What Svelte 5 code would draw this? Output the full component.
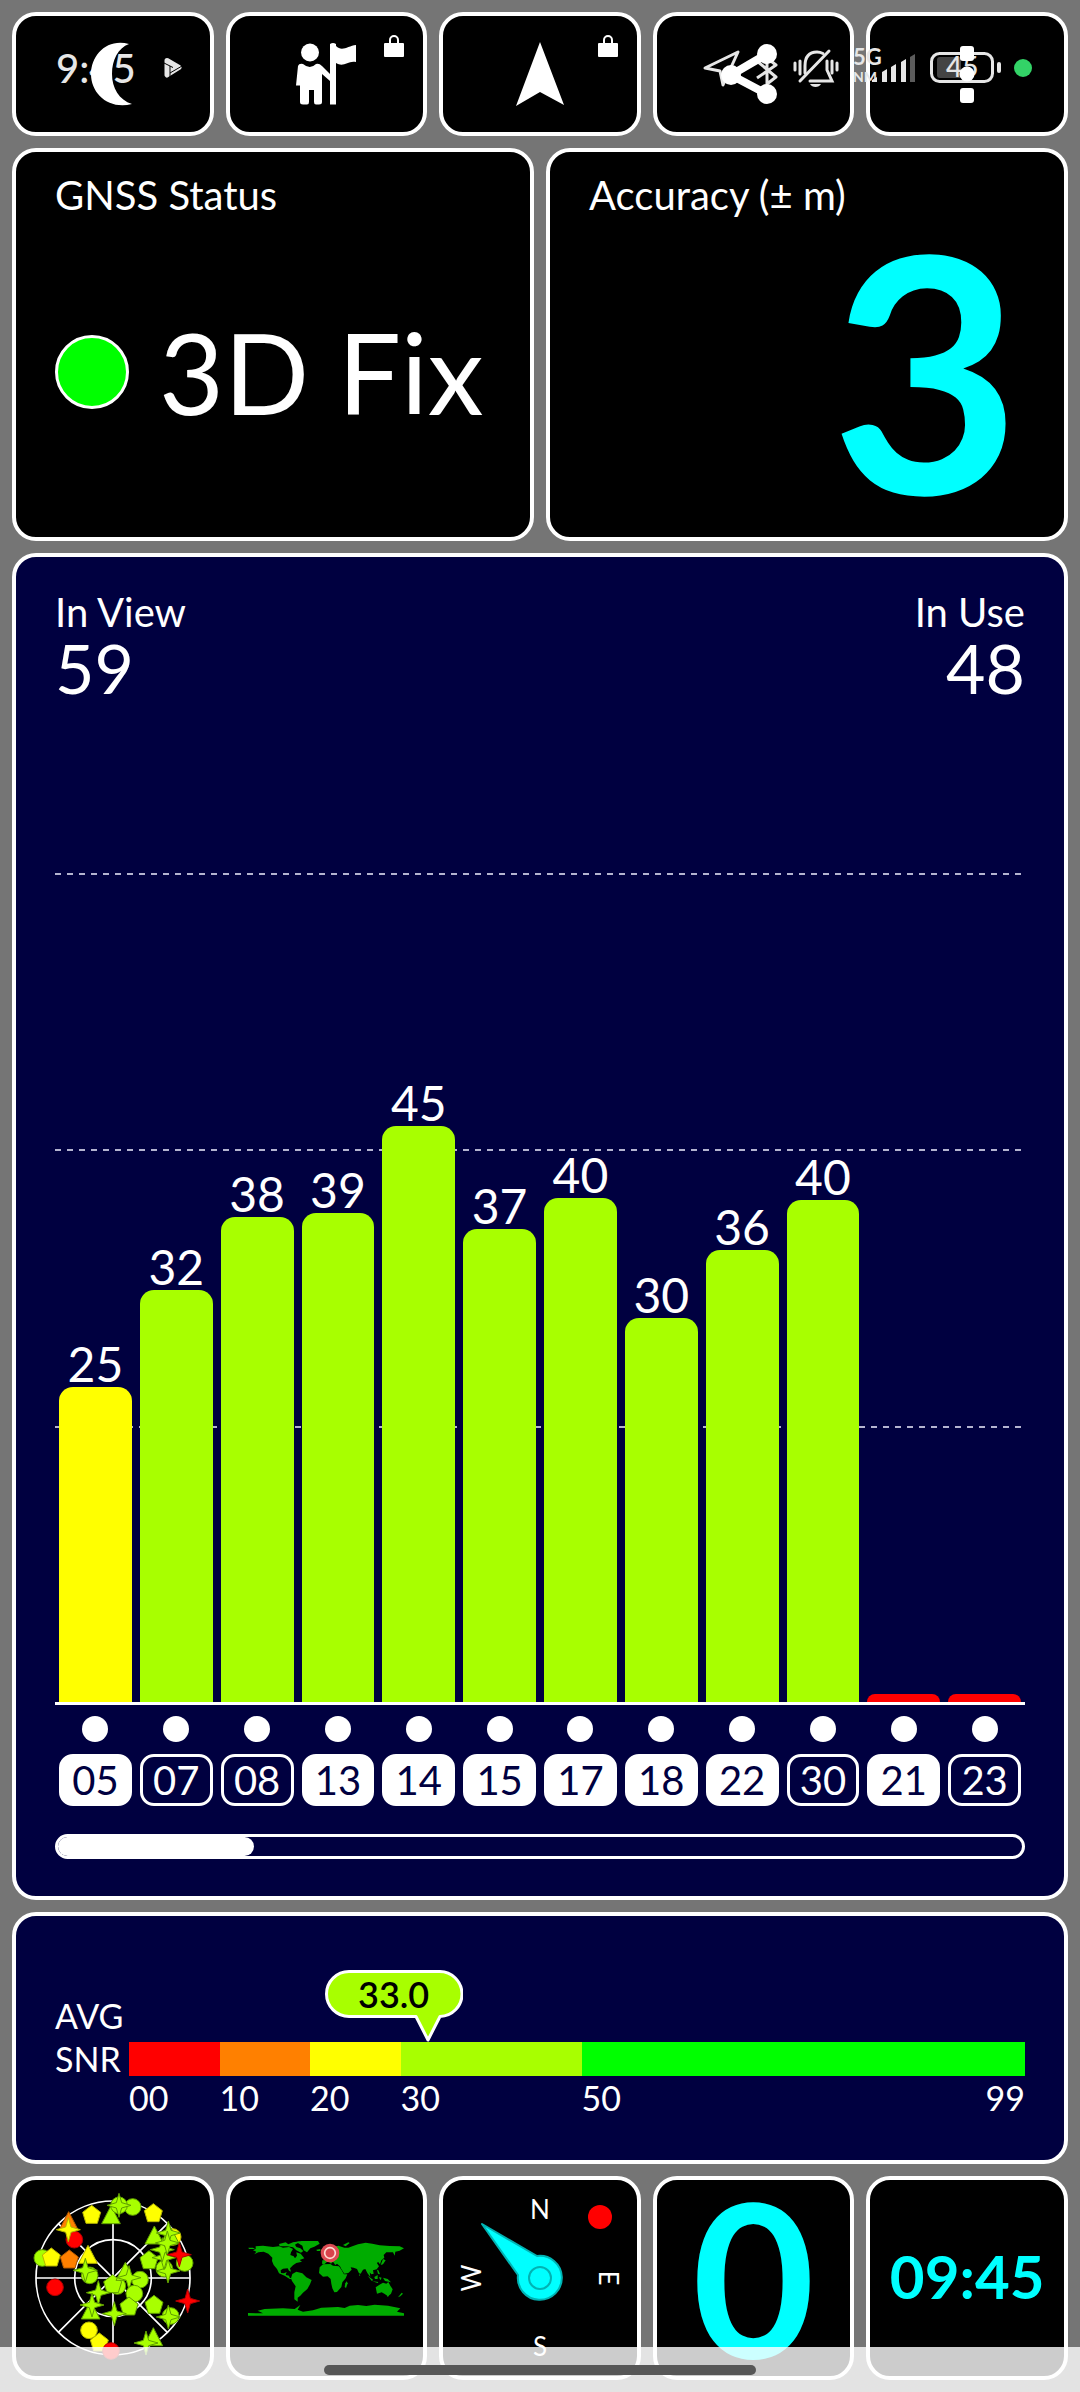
<script lang="ts">
  type Fill = 'green' | 'lime' | 'yellow' | 'orange' | 'red';

  interface Satellite {
    id: string;
    snr: number;
    level: number;
    color: Fill;
    used: boolean;
  }

  interface Marker {
    shape: 'circle' | 'penta' | 'tri' | 'star';
    color: Fill;
    x: number;
    y: number;
  }

  const maxLevel = 86.6;

  const satellites: Satellite[] = [
    { id: '05', snr: 25, level: 24.7, color: 'yellow', used: true },
    { id: '07', snr: 32, level: 32.3, color: 'lime', used: false },
    { id: '08', snr: 38, level: 38, color: 'lime', used: false },
    { id: '13', snr: 39, level: 38.3, color: 'lime', used: true },
    { id: '14', snr: 45, level: 45.1, color: 'lime', used: true },
    { id: '15', snr: 37, level: 37, color: 'lime', used: true },
    { id: '17', snr: 40, level: 39.5, color: 'lime', used: true },
    { id: '18', snr: 30, level: 30.1, color: 'lime', used: true },
    { id: '22', snr: 36, level: 35.4, color: 'lime', used: true },
    { id: '30', snr: 40, level: 39.3, color: 'lime', used: false },
    { id: '21', snr: 0, level: 0.6, color: 'red', used: true },
    { id: '23', snr: 0, level: 0.6, color: 'red', used: false },
  ];

  const bands: { from: string; to?: string; color: Fill }[] = [
    { from: '00', color: 'red' },
    { from: '10', color: 'orange' },
    { from: '20', color: 'yellow' },
    { from: '30', color: 'lime' },
    { from: '50', to: '99', color: 'green' },
  ];

  const inView = 59;
  const inUse = 48;
  const average = 33;

  let shownShare = $derived((satellites.length / inView) * 100);
  let averageLeft = $derived((average / 99) * 100);

  const shapes = {
    penta: 'M0-28L27-7L17 26H-17L-27-7Z',
    tri: 'M0-32L28 22H-28Z',
    star: 'M0-36L8-8L36 0L8 8L0 36L-8 8L-36 0L-8-8Z',
  };

  const sky: Marker[] = [
    { shape: 'penta', color: 'yellow', x: 275, y: 163 },
    { shape: 'tri', color: 'lime', x: 333, y: 168 },
    { shape: 'circle', color: 'lime', x: 398, y: 140 },
    { shape: 'circle', color: 'lime', x: 357, y: 135 },
    { shape: 'star', color: 'lime', x: 357, y: 135 },
    { shape: 'penta', color: 'yellow', x: 460, y: 158 },
    { shape: 'circle', color: 'red', x: 223, y: 238 },
    { shape: 'tri', color: 'orange', x: 206, y: 186 },
    { shape: 'star', color: 'yellow', x: 205, y: 208 },
    { shape: 'circle', color: 'lime', x: 127, y: 293 },
    { shape: 'penta', color: 'yellow', x: 154, y: 291 },
    { shape: 'penta', color: 'orange', x: 208, y: 297 },
    { shape: 'tri', color: 'yellow', x: 264, y: 287 },
    { shape: 'circle', color: 'red', x: 165, y: 381 },
    { shape: 'circle', color: 'lime', x: 269, y: 345 },
    { shape: 'star', color: 'lime', x: 256, y: 330 },
    { shape: 'circle', color: 'lime', x: 352, y: 377 },
    { shape: 'penta', color: 'lime', x: 338, y: 371 },
    { shape: 'tri', color: 'lime', x: 376, y: 338 },
    { shape: 'circle', color: 'lime', x: 420, y: 358 },
    { shape: 'star', color: 'lime', x: 387, y: 352 },
    { shape: 'circle', color: 'lime', x: 403, y: 400 },
    { shape: 'penta', color: 'lime', x: 387, y: 438 },
    { shape: 'star', color: 'lime', x: 295, y: 397 },
    { shape: 'tri', color: 'lime', x: 272, y: 454 },
    { shape: 'star', color: 'lime', x: 276, y: 434 },
    { shape: 'star', color: 'lime', x: 343, y: 460 },
    { shape: 'penta', color: 'lime', x: 462, y: 433 },
    { shape: 'circle', color: 'lime', x: 512, y: 467 },
    { shape: 'star', color: 'lime', x: 505, y: 470 },
    { shape: 'circle', color: 'yellow', x: 267, y: 510 },
    { shape: 'penta', color: 'yellow', x: 298, y: 546 },
    { shape: 'circle', color: 'red', x: 333, y: 572 },
    { shape: 'tri', color: 'lime', x: 460, y: 534 },
    { shape: 'star', color: 'lime', x: 438, y: 548 },
    { shape: 'star', color: 'red', x: 563, y: 422 },
    { shape: 'penta', color: 'lime', x: 447, y: 299 },
    { shape: 'tri', color: 'lime', x: 463, y: 229 },
    { shape: 'circle', color: 'yellow', x: 518, y: 230 },
    { shape: 'tri', color: 'lime', x: 510, y: 229 },
    { shape: 'star', color: 'lime', x: 505, y: 218 },
    { shape: 'circle', color: 'lime', x: 493, y: 325 },
    { shape: 'star', color: 'lime', x: 504, y: 332 },
    { shape: 'star', color: 'lime', x: 492, y: 292 },
    { shape: 'star', color: 'lime', x: 487, y: 268 },
    { shape: 'star', color: 'lime', x: 502, y: 248 },
    { shape: 'circle', color: 'lime', x: 554, y: 308 },
    { shape: 'star', color: 'red', x: 538, y: 283 },
  ];
</script>

{#snippet lock()}
  <svg class="lock" viewBox="0 0 20 23" aria-hidden="true">
    <path d="M6 10V6a4 4 0 0 1 8 0v4" fill="none" stroke="#fff" stroke-width="2" />
    <rect y="9" width="20" height="14" rx="1" fill="#fff" />
  </svg>
{/snippet}

<main class="page">
  <div class="status-bar">
    <span class="clock">9:45</span>
    <svg class="play" viewBox="0 0 18 20" aria-hidden="true">
      <path d="M3 2.500L15 9.500L3 17Z" fill="#e6e6e6" stroke="#e6e6e6" stroke-width="5" stroke-linejoin="round" />
      <path d="M0 5L9 9.500M6 8V19M6 15L18 8" stroke="#000" stroke-width="1" />
    </svg>
    <div class="status-icons">
      <svg width="38" height="40" viewBox="0 0 38 40" aria-hidden="true">
        <path d="M2 20L35 4L20 37L17 23Z" fill="none" stroke="#e6e6e6" stroke-width="3" stroke-linejoin="round" />
      </svg>
      <svg width="24" height="40" viewBox="0 0 24 40" aria-hidden="true">
        <path d="M2 13L21 29L12 36V10L21 17L2 30" fill="none" stroke="#e6e6e6" stroke-width="3" stroke-linejoin="round" />
      </svg>
      <svg width="46" height="40" viewBox="0 0 46 40" aria-hidden="true">
        <g fill="none" stroke="#e6e6e6" stroke-width="3" stroke-linecap="round">
          <path d="M7 33L36 3" />
          <path d="M12 25V18C12 8 17 4 24 4C26 4 28 4.500 30 5.500" />
          <path d="M34 13V22L39 33H17" />
          <path d="M2 15V22M7 13V26M39 13V25M44 15V22" />
        </g>
        <path d="M17 36H28C26 40 19 40 17 36Z" fill="#e6e6e6" />
      </svg>
      <svg width="63" height="40" viewBox="0 0 63 40" aria-hidden="true">
        <text class="network" x="0" y="17">5G</text>
        <text class="carrier" x="0" y="34">NM</text>
        <path d="M19 34V32L24 29V34ZM29 34V24L34 21V34ZM38 34V19L43 16V34ZM48 34V14L53 11V34Z" fill="#e6e6e6" />
        <path d="M57 34V9L62 6V34Z" fill="#5c5c5c" />
      </svg>
      <svg width="72" height="40" viewBox="0 0 72 40" aria-hidden="true">
        <rect x="1.500" y="5.500" width="61" height="28" rx="8" fill="none" stroke="#e6e6e6" stroke-width="3" />
        <path d="M10 9H31V30H10Q7 30 7 27V12Q7 9 10 9Z" fill="#444" />
        <rect x="67" y="14" width="4" height="11" rx="2" fill="#e6e6e6" />
        <text class="charge" x="16" y="29">45</text>
      </svg>
      <span class="privacy-dot"></span>
    </div>
  </div>

  <nav class="tiles">
    <button class="card tile" aria-label="Night mode">
      <svg class="icon" viewBox="0 0 64 64" aria-hidden="true">
        <path d="M48 2C26-4 10 13 10 32C10 52 28 68 51 62C38 58 31 46 31 32C31 18 37 6 48 2Z" fill="#fff" />
      </svg>
    </button>
    <button class="card tile" aria-label="Waypoint guide">
      <svg class="icon" viewBox="0 0 64 64" aria-hidden="true">
        <circle cx="16" cy="10.500" r="9" fill="#fff" />
        <path d="M36 2Q39 0 42 2V4C48 10 54 4 62 3V20C54 18 50 26 42 21V62.500H36V39L28 32V60Q28 62.500 25 62.500H22Q20 62.500 20 60V48H15V60Q15 62.500 13 62.500H9Q6 62.500 6 60V43.500H2L4 24Q5 21 9 22Q16 28 22 22Q25 21 28 24L36 32Z" fill="#fff" />
      </svg>
      {@render lock()}
    </button>
    <button class="card tile" aria-label="Navigate">
      <svg class="icon" viewBox="0 0 64 64" aria-hidden="true">
        <path d="M32 0L56 63L32 50L8 64Z" fill="#fff" />
      </svg>
      {@render lock()}
    </button>
    <button class="card tile" aria-label="Share">
      <svg class="icon" viewBox="0 0 64 64" aria-hidden="true">
        <path d="M45 12L9 33L45 52" fill="none" stroke="#fff" stroke-width="8" />
        <circle cx="45" cy="12" r="10" fill="#fff" />
        <circle cx="9" cy="33" r="10" fill="#fff" />
        <circle cx="45" cy="52" r="10" fill="#fff" />
      </svg>
    </button>
    <button class="card tile" aria-label="More options">
      <svg class="icon" viewBox="0 0 64 64" aria-hidden="true">
        <rect x="25" y="4" width="14" height="15" rx="3" fill="#fff" />
        <circle cx="32" cy="32" r="7.500" fill="#fff" />
        <rect x="25" y="46" width="14" height="15" rx="3" fill="#fff" />
      </svg>
    </button>
  </nav>

  <div class="readouts">
    <section class="card readout">
      <h2 class="label">GNSS Status</h2>
      <div class="fix">
        <span class="fix-dot"></span>
        <span>3D Fix</span>
      </div>
    </section>
    <section class="card readout">
      <h2 class="label">Accuracy (± m)</h2>
      <div class="accuracy">3</div>
    </section>
  </div>

  <section class="card chart">
    <div class="plot">
      <div class="lines">
        <span></span>
        <span class="line"></span>
        <span class="line"></span>
        <span class="line"></span>
      </div>
      <div class="counts">
        <div>
          <h2 class="label">In View</h2>
          <div class="count">{inView}</div>
        </div>
        <div class="count-right">
          <h2 class="label">In Use</h2>
          <div class="count">{inUse}</div>
        </div>
      </div>
      <div class="columns bars">
        {#each satellites as sat}
          <div class="bar-slot">
            {#if sat.snr > 0}
              <span class="bar-value">{sat.snr}</span>
            {/if}
            <div class="bar {sat.color}" style="height: {(sat.level / maxLevel) * 100}%"></div>
          </div>
        {/each}
      </div>
    </div>
    <div class="columns sats">
      {#each satellites as sat}
        <div class="sat">
          <span class="sat-dot"></span>
          <span class="chip" class:used={sat.used}>{sat.id}</span>
        </div>
      {/each}
    </div>
    <div class="scroll-track">
      <div class="scroll-thumb" style="width: {shownShare}%"></div>
    </div>
  </section>

  <section class="card average">
    <span class="avg">AVG</span>
    <div class="marker-row">
      <div class="bubble" style="left: {averageLeft}%">
        <svg class="bubble-shape" viewBox="0 0 138 72" aria-hidden="true">
          <path d="M24 1.500H114A22.500 22.500 0 0 1 115 46.500L103 70L91 46.500H24A22.500 22.500 0 0 1 24 1.500Z" fill="#a8ff00" stroke="#fff" stroke-width="3" stroke-linejoin="round" />
        </svg>
        <span class="bubble-value">{average.toFixed(1)}</span>
      </div>
    </div>
    <span class="snr">SNR</span>
    <div class="bands">
      {#each bands as band}
        <span class={band.color}></span>
      {/each}
    </div>
    <div class="bands scale">
      {#each bands as band}
        <span class="tick">
          <span>{band.from}</span>
          {#if band.to}<span>{band.to}</span>{/if}
        </span>
      {/each}
    </div>
  </section>

  <div class="tiles">
    <div class="card tile">
      <svg class="dial" viewBox="84 98 510 510" role="img" aria-label="Sky view">
        <g fill="none" stroke="#fff" stroke-width="5">
          <circle cx="339" cy="353" r="231" />
          <circle cx="339" cy="353" r="115" />
          <path d="M339 122V584M108 353H570M175 190L502 516M175 516L502 190" />
        </g>
        {#each sky as m}
          {#if m.shape === 'circle'}
            <circle class="mark-{m.color}" cx={m.x} cy={m.y} r="25" />
          {:else}
            <path class="mark-{m.color}" d={shapes[m.shape]} transform="translate({m.x} {m.y})" />
          {/if}
        {/each}
      </svg>
    </div>
    <div class="card tile">
      <svg class="map" viewBox="745 243 468 228" role="img" aria-label="World map">
        <g fill="#00ac00">
          <path d="M768 262L790 260L820 264L838 262L850 266L868 264L880 270L874 280L872 288L882 292L886 298L892 290L890 280L903 284L914 298L900 303L907 308L890 312L880 319L871 328L874 338L868 335L864 328L850 329L843 334L844 342L853 343L861 339L858 348L868 350L870 356L882 360L870 360L855 350L838 343L832 330L822 318L817 306L818 296L806 284L792 278L776 280L764 286L770 278L760 274L768 270Z" />
          <path d="M838 255L858 250L866 256L880 250L902 247L886 257L890 264L902 268L911 276L904 281L890 274L880 265L862 262L840 262ZM746 266L760 266L766 270L748 270Z" />
          <path d="M880 251L905 246L955 246L960 254L944 263L932 268L922 280L912 274L908 260L896 253Z" />
          <path d="M878 345L890 338L908 343L920 355L936 363L931 376L923 390L910 401L902 410L894 416L894 428L884 421L884 400L888 382L877 366L874 358Z" />
          <path d="M960 325L970 316L992 315L1000 320L1018 322L1026 334L1033 346L1043 346L1038 358L1028 370L1025 384L1012 399L1004 400L998 388L995 374L993 360L984 352L970 353L958 342Z" />
          <path d="M1041 367L1044 373L1039 387L1035 384L1037 373Z" />
          <path d="M967 314L968 304L980 303L977 297L986 292L993 287L986 280L1002 265L1016 260L1034 266L1046 266L1058 262L1075 256L1098 251L1118 254L1140 259L1170 261L1200 262L1213 268L1200 275L1187 278L1185 290L1180 280L1160 280L1152 288L1154 296L1145 304L1141 316L1135 308L1132 313L1138 322L1131 331L1120 334L1122 344L1115 346L1110 340L1112 354L1103 342L1097 330L1090 332L1083 344L1078 343L1072 330L1062 326L1053 325L1056 332L1046 342L1034 344L1025 330L1021 322L1012 314L1007 318L1000 308L994 314L985 306L974 316Z" />
          <path d="M972 288L978 286L981 296L972 296ZM950 272L962 270L962 276L952 276ZM1030 258L1046 250L1050 252L1038 262ZM1150 300L1158 304L1150 316L1143 318ZM1132 332L1136 334L1141 346L1135 344ZM1104 350L1120 362L1117 367ZM1124 354L1134 348L1134 360L1126 360ZM1138 354L1146 356L1142 364ZM1118 367L1136 369L1134 372ZM1150 356L1164 360L1174 370L1156 366ZM1078 345L1082 349L1079 351Z" />
          <path d="M1128 385L1142 376L1150 371L1160 374L1166 369L1172 380L1179 391L1174 404L1165 412L1154 404L1146 400L1132 404ZM1162 410L1168 410L1164 414ZM1206 401L1210 404L1202 412L1195 415Z" />
          <path d="M745 462L790 463L774 455L795 450L850 448L885 450L902 438L894 452L910 458L940 454L965 446L1015 444L1035 447L1050 440L1075 438L1100 441L1125 437L1165 440L1202 448L1192 458L1213 463V470H745Z" />
        </g>
        <circle cx="991" cy="282" r="28" fill="#dc4a52" />
        <circle cx="991" cy="282" r="16" fill="#d9434c" stroke="#ffdcd2" stroke-width="5" />
      </svg>
    </div>
    <div class="card tile">
      <svg class="dial" viewBox="0 0 170 170" role="img" aria-label="Compass">
        <g class="cardinal">
          <text x="85" y="26">N</text>
          <text x="85" y="163">S</text>
          <text transform="translate(144 85) rotate(90)">E</text>
          <text transform="translate(26 85) rotate(-90)">W</text>
        </g>
        <circle cx="145" cy="24" r="12" fill="red" />
        <path d="M27 31L82 63A22 22 0 1 1 63 82Z" fill="#0ff" stroke="#00b3b3" stroke-width="2" stroke-linejoin="round" />
        <circle cx="85" cy="85" r="11" fill="none" stroke="#00b3b3" stroke-width="2" />
      </svg>
    </div>
    <div class="card tile">
      <span class="speed">0</span>
    </div>
    <div class="card tile">
      <time class="time">09:45</time>
    </div>
  </div>

  <div class="nav-bar">
    <span class="nav-handle"></span>
  </div>
</main>

<style>
  :global(body) {
    background: #757575;
  }

  .page {
    --lime: #a8ff00;
    --navy: #000040;
    position: relative;
    isolation: isolate;
    box-sizing: border-box;
    display: grid;
    grid-template-rows: 124px 393px 1fr 252px 204px;
    grid-template-columns: minmax(0, 1fr);
    gap: 12px;
    min-height: 100vh;
    padding: 12px;
    background: #757575;
    color: #fff;
    font-family: Lato, 'Open Sans', sans-serif;
  }

  .page * {
    box-sizing: border-box;
  }

  .card {
    border: 4px solid #fff;
    border-radius: 24px;
    background: #000;
  }

  .tiles {
    display: grid;
    grid-template-columns: repeat(5, minmax(0, 1fr));
    gap: 12px;
  }

  .tile {
    display: flex;
    align-items: center;
    justify-content: center;
    padding: 0;
  }

  button.tile {
    position: relative;
    cursor: pointer;
  }

  .icon {
    position: relative;
    z-index: 2;
    width: 64px;
    height: 64px;
    overflow: visible;
  }

  .lock {
    position: absolute;
    top: 18px;
    right: 19px;
    width: 20px;
    height: 23px;
  }

  /* system overlays */
  .status-bar {
    position: absolute;
    z-index: 1;
    top: 48px;
    left: 0;
    right: 0;
    display: flex;
    align-items: center;
    height: 40px;
    padding: 0 48px 0 56px;
    color: #e6e6e6;
    pointer-events: none;
  }

  .clock {
    font-size: 40px;
    line-height: 40px;
    font-weight: 500;
  }

  .play {
    width: 18px;
    height: 20px;
    margin-left: 28px;
  }

  .status-icons {
    display: flex;
    align-items: center;
    gap: 14px;
    margin-left: auto;
  }

  .status-icons svg {
    overflow: visible;
  }

  .status-icons text {
    fill: #e6e6e6;
    font-weight: 700;
  }

  .network {
    font-size: 22px;
  }

  .carrier {
    font-size: 14px;
  }

  .status-icons .charge {
    font-size: 28px;
    font-weight: 500;
  }

  .privacy-dot {
    width: 18px;
    height: 18px;
    margin-left: -2px;
    border-radius: 50%;
    background: #33d367;
  }

  .nav-bar {
    position: absolute;
    z-index: 3;
    left: 0;
    right: 0;
    bottom: 0;
    display: flex;
    justify-content: center;
    align-items: center;
    height: 45px;
    background: rgba(255, 255, 255, 0.8);
  }

  .nav-handle {
    width: 40%;
    height: 10px;
    border-radius: 5px;
    background: #575757;
  }

  /* readouts */
  .readouts {
    display: grid;
    grid-template-columns: repeat(2, minmax(0, 1fr));
    gap: 12px;
  }

  .readout {
    padding: 27px 39px 0;
  }

  .label {
    margin: 0;
    font-size: 40px;
    line-height: 32px;
    font-weight: 400;
  }

  .fix {
    display: flex;
    align-items: center;
    gap: 30px;
    height: 322px;
    font-size: 112px;
    line-height: 128px;
    white-space: nowrap;
  }

  .fix-dot {
    flex: none;
    width: 74px;
    height: 74px;
    border: 3px solid #fff;
    border-radius: 50%;
    background: #0f0;
  }

  .accuracy {
    padding-right: 4px;
    color: #0ff;
    font-size: 328px;
    line-height: 312px;
    font-weight: 700;
    text-align: right;
  }

  /* signal chart */
  .chart {
    display: flex;
    flex-direction: column;
    padding: 39px 39px 37px;
    background: var(--navy);
  }

  .plot {
    flex: 1;
    display: grid;
    border-bottom: 3px solid #fff;
  }

  .plot > * {
    grid-area: 1 / 1;
  }

  .counts {
    display: flex;
    justify-content: space-between;
    align-items: flex-start;
  }

  .count {
    font-size: 68px;
    line-height: 80px;
  }

  .count-right {
    text-align: right;
  }

  .lines {
    display: grid;
    grid-template-rows: repeat(4, 1fr);
  }

  .line {
    background: repeating-linear-gradient(90deg, #b4b4d0 0 6px, transparent 6px 12px) top / 100% 2px no-repeat;
  }

  .columns {
    display: grid;
    grid-template-columns: repeat(12, minmax(0, 1fr));
  }

  .bar-slot {
    display: flex;
    flex-direction: column;
    justify-content: flex-end;
    padding: 0 4px;
    text-align: center;
  }

  .bar-value {
    font-size: 48px;
    line-height: 46px;
  }

  .bar {
    border-radius: 14px 14px 0 0;
  }

  .green {
    background: #0f0;
  }

  .lime {
    background: var(--lime);
  }

  .yellow {
    background: #ff0;
  }

  .orange {
    background: #ff8000;
  }

  .red {
    background: #f00;
  }

  .sats {
    margin-top: 11px;
  }

  .sat {
    display: flex;
    flex-direction: column;
    align-items: center;
    gap: 12px;
    padding: 0 4px;
  }

  .sat-dot {
    width: 26px;
    height: 26px;
    border-radius: 50%;
    background: #fff;
  }

  .chip {
    width: 100%;
    border: 3px solid #fff;
    border-radius: 14px;
    font-size: 40px;
    line-height: 46px;
    text-align: center;
  }

  .chip.used {
    background: #fff;
    color: var(--navy);
  }

  .scroll-track {
    height: 25px;
    margin-top: 28px;
    border: 3px solid #fff;
    border-radius: 13px;
  }

  .scroll-thumb {
    height: 100%;
    border-radius: 10px;
    background: #fff;
  }

  /* average signal */
  .average {
    display: grid;
    grid-template-columns: 74px minmax(0, 1fr);
    grid-template-rows: 72px 34px 42px;
    padding: 54px 39px 0;
    background: var(--navy);
    font-size: 34px;
  }

  .avg {
    align-self: end;
    line-height: 52px;
  }

  .snr {
    line-height: 34px;
  }

  .marker-row {
    position: relative;
  }

  .bubble {
    position: absolute;
    bottom: 0;
    width: 138px;
    height: 72px;
    margin-left: -103px;
  }

  .bubble-shape {
    display: block;
    width: 100%;
    height: 100%;
  }

  .bubble-value {
    position: absolute;
    inset: 0 0 auto;
    color: #000;
    font-size: 36px;
    font-weight: 600;
    line-height: 48px;
    text-align: center;
  }

  .bands {
    display: grid;
    grid-template-columns: 10fr 10fr 10fr 20fr 49fr;
  }

  .scale {
    grid-column: 2;
    line-height: 44px;
  }

  .tick {
    display: flex;
    justify-content: space-between;
  }

  /* bottom tiles */
  .dial {
    width: 170px;
    height: 170px;
    overflow: visible;
  }

  .map {
    width: 156px;
    height: 76px;
  }

  .mark-lime {
    fill: #a8ff00;
    stroke: #5f9e00;
  }

  .mark-yellow {
    fill: #ff0;
    stroke: #b5b500;
  }

  .mark-orange {
    fill: #ff8000;
    stroke: #b35a00;
  }

  .mark-red {
    fill: #f00;
    stroke: #b00000;
  }

  .dial [class^='mark-'] {
    stroke-width: 3;
  }

  .cardinal text {
    fill: #fff;
    font-size: 26px;
    text-anchor: middle;
  }

  .speed {
    padding-bottom: 4px;
    color: #0ff;
    font-size: 212px;
    line-height: 192px;
    font-weight: 700;
  }

  .time {
    padding-bottom: 4px;
    color: #0ff;
    font-size: 60px;
    line-height: 60px;
    font-weight: 700;
  }
</style>
